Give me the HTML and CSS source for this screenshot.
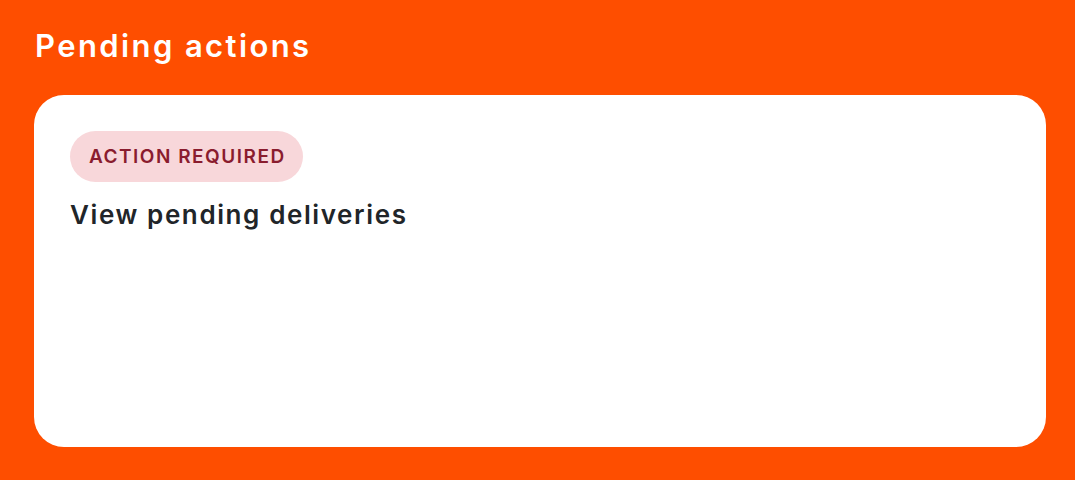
FILE: index.html
```html
<!doctype html>
<html>
<head>
<meta charset="utf-8">
<title>Pending actions</title>
<link rel="stylesheet" href="styles.css">
</head>
<body>
	<div class="page">
		<h2 class="page_title">Pending actions</h2>
		<div class="card">
			<span class="badge">ACTION REQUIRED</span>
			<h3 class="card_title">View pending deliveries</h3>
		</div>
	</div>
</body>
</html>
```

FILE: styles.css
```css
*{margin:0; padding:0; box-sizing:border-box;}
body{background:#fe4e00; font-family:Inter, "Open Sans", sans-serif;}
.page{padding:26px 29px 0 34px;}
.page_title{color:#fff; font-size:31px; font-weight:600; letter-spacing:2.4px; line-height:40px; height:69px; padding-left:1px;}
.card{background:#fff; border-radius:30px; height:352px; padding:36px 36px;}
.badge{display:inline-block; background:#f8d7da; color:#8a1c2e; font-size:19px; font-weight:600; letter-spacing:1.5px; line-height:51px; height:51px; padding:0 17px 0 19px; border-radius:26px;}
.card_title{color:#212529; font-size:26px; font-weight:600; letter-spacing:1.6px; line-height:34px; margin-top:16px;}
```
